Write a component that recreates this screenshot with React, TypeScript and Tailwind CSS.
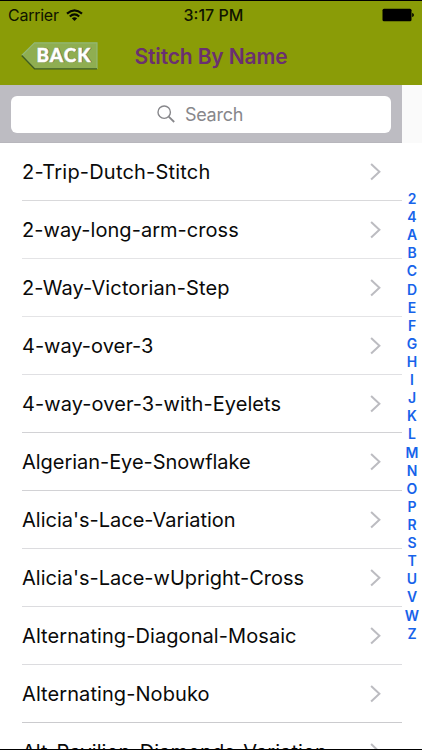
const stitches = [
  { name: '2-Trip-Dutch-Stitch', spacing: 'tracking-[0.2px]', line: 'border-[#d9d9db]' },
  { name: '2-way-long-arm-cross', spacing: 'tracking-[0.04px]', line: 'border-[#e4e4e6]' },
  { name: '2-Way-Victorian-Step', spacing: 'tracking-[0.13px]', line: 'border-[#e4e4e6]' },
  { name: '4-way-over-3', spacing: 'tracking-[0px]', line: 'border-[#e0e0e3]' },
  { name: '4-way-over-3-with-Eyelets', spacing: 'tracking-[0.08px]', line: 'border-[#d2d2d5]' },
  { name: 'Algerian-Eye-Snowflake', spacing: 'tracking-[-0.04px]', line: 'border-[#d2d2d5]' },
  { name: "Alicia's-Lace-Variation", spacing: 'tracking-[0px]', line: 'border-[#dcdcdf]' },
  { name: "Alicia's-Lace-wUpright-Cross", spacing: 'tracking-[0px]', line: 'border-[#dcdcdf]' },
  { name: 'Alternating-Diagonal-Mosaic', spacing: 'tracking-[0.08px]', line: 'border-[#dcdcdf]' },
  { name: 'Alternating-Nobuko', spacing: 'tracking-[0.08px]', line: 'border-[#cbcbce]' },
  { name: 'Alt-Pavilion-Diamonds-Variation', spacing: 'tracking-[0.07px]', line: 'border-[#dcdcdf]' },
];

const indexTitles = '24ABCDEFGHIJKLMNOPRSTUVWZ'.split('');

function StatusBar() {
  return (
    <div className="grid h-7 grid-cols-[1fr_60px_1fr] items-center pl-2 pr-2 text-[16px] leading-none text-[#101400]">
      <div className="flex items-center gap-[7px]">
        <span className="tracking-[-0.25px]">Carrier</span>
        <svg width="17" height="13" viewBox="0 0 17 13" fill="none" stroke="#080a00" strokeWidth="2.2">
          <path d="M1 4.6Q8.5-2 16 4.6" />
          <path d="M3.8 7.5Q8.5 3.3 13.2 7.5" />
          <path d="M8.5 12 5.8 9.3Q8.5 7 11.2 9.3Z" fill="#080a00" stroke="none" />
        </svg>
      </div>
      <span className="ml-[2.5px] whitespace-nowrap font-medium">3:17 PM</span>
      <svg className="justify-self-end" width="32" height="14" viewBox="0 0 32 14">
        <rect x=".5" y=".8" width="29" height="12.4" rx="1.5" fill="#000" />
        <path d="M30.2 5C32.4 5.2 32.4 8.8 30.2 9Z" fill="#000" />
      </svg>
    </div>
  );
}

function BackButton() {
  return (
    <button className="block" aria-label="Back">
      <svg width="78" height="29" viewBox="0 0 78 29">
        <path d="M.7 13.5 13.5.7H76V27H13.5Z" fill="#8fae51" />
        <path d="M.7 13.5 13.5.9H76V27" fill="none" stroke="#93b876" strokeWidth="1.2" />
        <path d="M.7 13.5 13.5 26.8H76" fill="none" stroke="#3f5d22" strokeWidth="1.3" />
        <g fontFamily="Lato" fontWeight="900" fontSize="19">
          <text x="16.2" y="20.4" textLength="54" fill="#626c4d" stroke="#626c4d" strokeWidth=".5">BACK</text>
          <text x="15.5" y="19.6" textLength="54" fill="#fff" stroke="#fff" strokeWidth=".4">BACK</text>
        </g>
      </svg>
    </button>
  );
}

function Chevron() {
  return (
    <svg className="shrink-0" width="12" height="18" viewBox="0 0 12 18" fill="none" stroke="#bcbcc1" strokeWidth="2">
      <path d="m1.1 1.1 8.3 7.7-8.3 7.7" />
    </svg>
  );
}

export default function App() {
  return (
    <div className="flex h-[750px] w-[422px] flex-col overflow-hidden border-y border-black bg-white font-['Inter',sans-serif]">
      <header className="h-[84px] shrink-0 bg-[#8a9c07]">
        <StatusBar />
        <div className="grid h-[54px] grid-cols-[78px_1fr_78px] items-center px-[21px]">
          <BackButton />
          <h1 className="whitespace-nowrap text-center text-[21px] font-semibold leading-none tracking-[-0.14px] text-[#6a3070]">Stitch By Name</h1>
        </div>
      </header>
      <div className="flex h-[58px] shrink-0 bg-[#fafafa]">
        <div className="w-[402px] border-b border-[#b7b6bc] bg-[#bdbcc2] px-[11px] pt-[11px]">
          <div className="flex h-[37px] items-center justify-center gap-2.5 rounded-md bg-white pb-px pr-0.5 text-[18px] text-[#87878b]">
            <svg width="18" height="18" viewBox="0 0 18 18" fill="none" stroke="#87878b" strokeWidth="1.4">
              <circle cx="7.2" cy="7.2" r="6.2" />
              <path d="m11.7 11.7 5.5 5.3" strokeWidth="1.8" />
            </svg>
            <span className="tracking-[-0.25px]">Search</span>
          </div>
        </div>
      </div>
      <main className="flex min-h-0 flex-1">
        <ul className="w-[402px] pl-[22px]">
          {stitches.map((stitch) => (
            <li key={stitch.name} className={`flex h-[58px] items-center justify-between border-b pr-5 text-[20px] text-[#0a0a0a] ${stitch.line}`}>
              <span className={`whitespace-nowrap ${stitch.spacing}`}>{stitch.name}</span>
              <Chevron />
            </li>
          ))}
        </ul>
        <nav className="flex w-5 flex-col items-center pt-[47px] text-[14px] font-semibold text-[#1763ea]">
          {indexTitles.map((title) => (
            <span key={title} className="h-[18.11px] shrink-0 leading-[18.11px]">{title}</span>
          ))}
        </nav>
      </main>
    </div>
  );
}
